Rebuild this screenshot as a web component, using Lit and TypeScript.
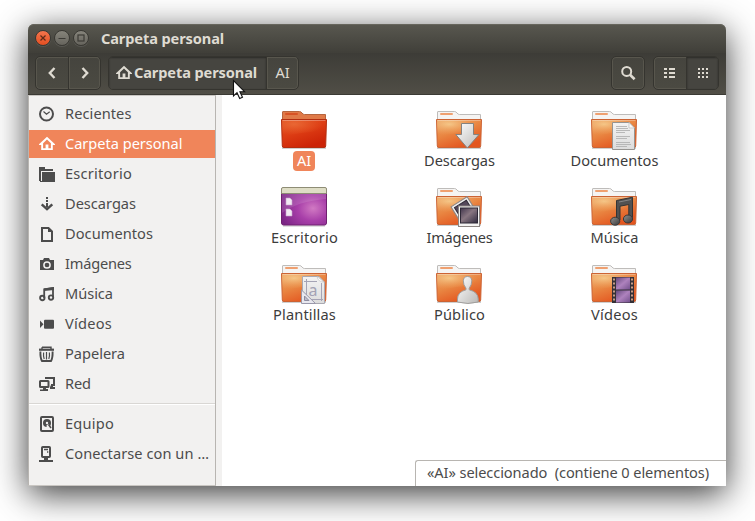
import { LitElement, html, css, svg } from "lit";
import { customElement, property } from "lit/decorators.js";
import { classMap } from "lit/directives/class-map.js";

/** A single-line label whose tracking is adjusted to fill a given width. */
@customElement("fit-label")
class FitLabel extends LitElement {
  @property() text = "";
  @property({ type: Number }) width = 0;
  static styles = css`
    :host { display: inline-block; white-space: pre; flex: none; }
    .label { display: inline-block; }
  `;
  updated() {
    const el = this.renderRoot.querySelector(".label") as HTMLElement;
    el.style.letterSpacing = "0";
    const natural = el.getBoundingClientRect().width;
    const gap = (this.width - natural) / this.text.length;
    el.style.letterSpacing = `${gap.toFixed(3)}px`;
  }
  render() {
    return html`<span class="label">${this.text}</span>`;
  }
}

const home = svg`<path d="M8 .8 16 8.2V9H13.8V14H2.2V9H0V8.2Z M8 3.4 4.1 7.2V12.2H6.6V8.6H9.4V12.2H11.9V7.2Z" fill="currentColor" fill-rule="evenodd"/>`;

const glyphs: Record<string, unknown> = {
  home,
  clock: svg`<circle cx="7.5" cy="8" r="6.5" fill="none" stroke="currentColor" stroke-width="2"/><path d="M4.5 5.5 7.5 8.2 10.7 5.8" fill="none" stroke="currentColor" stroke-width="1.2"/>`,
  folder: svg`<path d="M0 1H6V3H14V5H2V15H0Z M3 6H16V16H1V15H3Z" fill="currentColor"/><path d="M2.5 15V5.5H16" fill="none" stroke="#f2f1f0" stroke-width="1"/>`,
  down: svg`<path d="M7 1h2v2H7zM7 4h2v2H7zM7 7h2v4H7z" fill="currentColor"/><path d="M2.7 8.3 8 13.2 13.3 8.3" fill="none" stroke="currentColor" stroke-width="2.4"/>`,
  doc: svg`<path d="M3 2H9.5L13 5.5V15H3Z" fill="none" stroke="currentColor" stroke-width="2"/><path d="M9 1.5V6H13.5Z" fill="currentColor"/>`,
  camera: svg`<path d="M1 4H4L5 2H10L11 4H15V14H1Z" fill="currentColor"/><circle cx="8" cy="9" r="3.1" fill="none" stroke="#f2f1f0" stroke-width="1.5"/>`,
  music: svg`<path d="M5.2 12V3.2L14 2V11" fill="none" stroke="currentColor" stroke-width="1.8"/><path d="M5 2.5 15 1V4L5 5Z" fill="currentColor"/><circle cx="3.3" cy="12" r="2.2" fill="none" stroke="currentColor" stroke-width="1.9"/><circle cx="12" cy="11.6" r="2.2" fill="none" stroke="currentColor" stroke-width="1.9"/>`,
  video: svg`<rect x="5" y="3.7" width="10" height="9" rx="1" fill="currentColor"/><path d="M1 4.5V12L4.5 8.3Z" fill="currentColor"/>`,
  trash: svg`<path d="M3 1.2H12V3M3 1.2V3" fill="none" stroke="currentColor" stroke-width="1.4"/><path d="M0 2.6H15V4.8H0Z" fill="currentColor"/><path d="M1.4 5.5Q1.2 12 3 15H12Q13.8 12 13.6 5.5" fill="none" stroke="currentColor" stroke-width="1.9"/><path d="M4.6 6.5Q4.2 10 5.2 13M7.5 6V13.5M10.4 6.5Q10.8 10 9.8 13" fill="none" stroke="currentColor" stroke-width="1.2"/>`,
  net: svg`<path d="M7 3V2H15V9H12" fill="none" stroke="currentColor" stroke-width="2"/><path d="M12 9H14V11H16V13H11V11Z" fill="currentColor"/><rect x="1" y="5" width="8.5" height="6" rx=".5" fill="none" stroke="currentColor" stroke-width="2"/><path d="M4 12H7V13H9V15H1V13.4H4Z" fill="currentColor"/>`,
  disk: svg`<rect x="2" y="1" width="12" height="14" rx="1" fill="none" stroke="currentColor" stroke-width="2"/><circle cx="8" cy="7" r="4" fill="currentColor"/><circle cx="8" cy="7" r="1.2" fill="#f2f1f0"/><path d="M8.2 9 12 13" stroke="#f2f1f0" stroke-width="3"/><path d="M9.5 8.5 12 12" stroke="currentColor" stroke-width="1.5"/>`,
  server: svg`<rect x="3" y="1" width="8" height="10" rx=".8" fill="none" stroke="currentColor" stroke-width="2"/><path d="M5 3.5H9M8 6H9.3M7 11V14" stroke="currentColor" stroke-width="1.3"/><path d="M0 14H14V16H0ZM5 12H9V14H5Z" fill="currentColor"/>`,
  back: svg`<path d="M10.5 3 5.8 8 10.5 13" fill="none" stroke="currentColor" stroke-width="2.4"/>`,
  forward: svg`<path d="M5.5 3 10.2 8 5.5 13" fill="none" stroke="currentColor" stroke-width="2.4"/>`,
  search: svg`<circle cx="6.7" cy="6.4" r="4.5" fill="none" stroke="currentColor" stroke-width="2"/><path d="M10 9.8 14.6 14.3" stroke="currentColor" stroke-width="2.6"/>`,
  list: svg`<path d="M2 3h3v2H2zM7 3h6v2H7zM2 7h3v2H2zM7 7h6v2H7zM2 11h3v2H2zM7 11h6v2H7z" fill="currentColor"/>`,
  grid: svg`<path d="M3 3h2v2H3zM7 3h2v2H7zM11 3h2v2h-2zM3 7h2v2H3zM7 7h2v2H7zM11 7h2v2h-2zM3 11h2v2H3zM7 11h2v2H7zM11 11h2v2h-2z" fill="currentColor"/>`,
};

const glyph = (name: string) =>
  html`<svg class="glyph" width="16" height="16" viewBox="0 0 16 16">${glyphs[name]}</svg>`;

/** Emblems laid over the bottom-right corner of a folder. */
const emblems: Record<string, unknown> = {
  none: svg``,
  download: svg`<path d="M26.5 15.5H38.5V26.5H44L32.3 40 20.8 26.5H26.5Z" fill="url(#metal)" stroke="#85827f"/>`,
  document: svg`<path d="M22.5 14.5H39L44.5 20V41.5H22.5Z" fill="url(#paper)" stroke="#969491"/><path d="M39 14.5V20H44.5Z" fill="#fafafa" stroke="#bbb" stroke-width=".7"/><path d="M26 18.5H37M26 20.5H38M26 22.5H40M26 24.5H35M26 28.5H40M26 30.5H37M26 34.5H40M26 36.5H41M26 38.5H37" stroke="#b2b2b2" stroke-width=".9"/>`,
  images: svg`<g transform="rotate(-32 28 25)"><rect x="19.5" y="16" width="19" height="19" fill="#eee" stroke="#8b8583"/><rect x="22" y="18.5" width="14" height="13" fill="#54485b" stroke="#302b38"/></g><rect x="23.5" y="21" width="21" height="20.5" fill="#f4f3f2" stroke="#8b8583"/><rect x="25.5" y="23" width="17" height="15" fill="url(#photo)" stroke="#2d2836"/>`,
  music: svg`<path d="M26.5 15.5 42.5 12.2V32.5H38.8V19.5L30 21.2V35H26.5Z" fill="#515151" stroke="#343434"/><path d="M29 17 41 14.5" stroke="#858585"/><ellipse cx="25.2" cy="36.2" rx="4.6" ry="4" fill="url(#note)" stroke="#383838"/><ellipse cx="38" cy="34" rx="4.6" ry="4" fill="url(#note)" stroke="#383838"/>`,
  templates: svg`<path d="M22.5 14.5H39L44.5 20V41.5H22.5Z" fill="url(#paper)" stroke="#aaa9b2"/><path d="M37 14.5Q38 20 44 20Z" fill="#fff" stroke="#bbb" stroke-width=".6"/><path d="M26.5 17V35M41.5 21V39M24 19.5H37M30 37.5H43" stroke="#a5a4b5" stroke-width="1"/><text x="28.5" y="34" class="letter">a</text><path d="M21.5 28 35.5 41.5H21.5Z" fill="#e8e8ef" stroke="#9998aa"/><path d="M24.5 34 29 38.5H24.5Z" fill="#bdbccb" stroke="#8e8da0"/>`,
  public: svg`<path d="M22.5 40V37Q22.5 30 31 27.8V26.2Q28.3 23 28.3 18.8Q28.7 14.5 32.5 14.5Q36.4 14.5 36.8 18.8Q36.8 23 34.2 26.2V27.8Q43.2 30 43.2 37V40Q33 43 22.5 40Z" fill="url(#metal)" stroke="#a09e9c"/>`,
  video: svg`<rect x="22" y="15" width="22" height="26" fill="#343036"/><rect x="26" y="15.5" width="14" height="12" fill="url(#film)"/><rect x="26" y="28.5" width="14" height="12" fill="url(#film)"/><path d="M24 16.5V40M42 16.5V40" stroke="#d8a88f" stroke-width="1.8" stroke-dasharray="2 2"/>`,
};

const folderArt = (kind: string) => {
  const red = kind === "none";
  return html`<svg class="art" width="48" height="44" viewBox="0 0 48 44">
    <defs>
      <linearGradient id="front-${kind}" x1="0" y1="0" x2="0.55" y2="1">
        <stop offset="0" stop-color="${red ? "#df5121" : "#eda568"}" />
        <stop offset=".5" stop-color="${red ? "#dd3d14" : "#e98642"}" />
        <stop offset="1" stop-color="${red ? "#cc2307" : "#e3551f"}" />
      </linearGradient>
      <radialGradient id="glow-${kind}" cx=".28" cy=".25" r=".65">
        <stop offset="0" stop-color="${red ? "#ef7841" : "#fae0a2"}" stop-opacity=".65" />
        <stop offset="1" stop-color="${red ? "#ed6f37" : "#f1ae68"}" stop-opacity="0" />
      </radialGradient>
      <linearGradient id="metal" x1="0" y1="0" x2="1" y2="1"><stop stop-color="#fff" /><stop offset="1" stop-color="#bab9b7" /></linearGradient>
      <linearGradient id="paper" x1="0" y1="0" x2="0" y2="1"><stop stop-color="#f3f3f3" /><stop offset="1" stop-color="#dcdcdc" /></linearGradient>
      <linearGradient id="photo" x1="0" y1="0" x2="1" y2="1"><stop stop-color="#3f344b" /><stop offset=".45" stop-color="#887681" /><stop offset="1" stop-color="#302b40" /></linearGradient>
      <linearGradient id="note" x1="0" y1="0" x2="1" y2="1"><stop stop-color="#929292" /><stop offset="1" stop-color="#383838" /></linearGradient>
      <linearGradient id="film" x1="0" y1="0" x2="1" y2="1"><stop stop-color="#66497d" /><stop offset=".5" stop-color="#ae82bd" /><stop offset="1" stop-color="#74518d" /></linearGradient>
    </defs>
    <path d="M2 40H46" stroke="#000" stroke-opacity=".25" stroke-width="1.5" />
    <path d="M2.5 14V4Q2.5 3.5 3 3.5H19.5Q21 3.5 22 5T24.5 6.5H45.5V14Z" fill="${red ? "#e07a48" : "#f5f4f3"}" stroke="${red ? "#b6653e" : "#bebcba"}" />
    <rect x="5" y="5" width="13" height="2" rx="1" fill="${red ? "#d75325" : "#efa070"}" />
    <path d="M1.5 11.5H46.5L45.7 38Q45.6 39.5 44 39.5H4Q2.4 39.5 2.3 38Z" fill="url(#front-${kind})" stroke="${red ? "#b32e10" : "#cc6334"}" />
    <path d="M2 12H46L45.6 23Q20 24 2.3 29Z" fill="url(#glow-${kind})" />
    <path d="M2.5 12.5H45.5" stroke="#fff" stroke-opacity=".3" />
    ${emblems[kind]}
  </svg>`;
};

const desktopArt = () => html`<svg class="art" width="48" height="44" viewBox="0 0 48 44">
  <defs>
    <radialGradient id="desk" cx=".7" cy=".55" r=".75">
      <stop offset="0" stop-color="#d17ac3" /><stop offset=".45" stop-color="#a83fa9" /><stop offset="1" stop-color="#7b2585" />
    </radialGradient>
  </defs>
  <path d="M3 41H45" stroke="#000" stroke-opacity=".25" />
  <rect x="1.5" y="3" width="45" height="37" rx="2" fill="url(#desk)" stroke="#702070" />
  <path d="M2 9H46V14Q18 16 2 28Z" fill="#fff" fill-opacity=".12" />
  <path d="M1.5 8.5V4Q1.5 2.5 3 2.5H45Q46.5 2.5 46.5 4V8.5Z" fill="#deddc5" stroke="#8e8d75" />
  <path d="M6 13H10L12 15V20H6ZM6 24H10L12 26V31H6Z" fill="#f1e9f2" stroke="#c7a3cc" stroke-width=".6" />
</svg>`;

type Place = [icon: string, name: string, width: number];
const places: Place[] = [
  ["clock", "Recientes", 66.5], ["home", "Carpeta personal", 117.5], ["folder", "Escritorio", 67],
  ["down", "Descargas", 71], ["doc", "Documentos", 88], ["camera", "Imágenes", 66.5],
  ["music", "Música", 48], ["video", "Vídeos", 47], ["trash", "Papelera", 60], ["net", "Red", 26],
];
const devices: Place[] = [["disk", "Equipo", 49], ["server", "Conectarse con un …", 144]];
const files: Place[] = [
  ["none", "AI", 14], ["download", "Descargas", 71], ["document", "Documentos", 88],
  ["desktop", "Escritorio", 67], ["images", "Imágenes", 66], ["music", "Música", 48],
  ["templates", "Plantillas", 63], ["public", "Público", 51], ["video", "Vídeos", 47],
];

@customElement("app-root")
class AppRoot extends LitElement {
  static styles = css`
    :host, * { box-sizing: border-box; }
    :host {
      display: block; width: 755px; height: 521px; padding: 24px 29px 35px 28px;
      overflow: hidden; background: #fff;
      font: 14.6px/20px "Noto Sans", "Open Sans", sans-serif; color: #4c4c4c;
    }
    .window {
      position: relative; display: flex; flex-direction: column; width: 698px; height: 462px;
      border-radius: 6px 6px 0 0; background: #fff;
      box-shadow: 0 8px 34px rgba(0, 0, 0, .78);
    }
    svg { display: block; flex: none; }
    fit-label { position: relative; top: -1px; }
    .titlebar {
      height: 29px; flex: none; display: flex; align-items: center; gap: 3px; padding-left: 7px;
      border-radius: 6px 6px 0 0; color: #dfdbd2; font-weight: 700;
      background: linear-gradient(#595850, #403f39); box-shadow: inset 0 1px #67665d;
    }
    .titlebar fit-label { margin-left: 9px; }
    .dot {
      width: 16px; height: 16px; border-radius: 50%; border: 1px solid #393833;
      background: linear-gradient(#86847b, #66645d); box-shadow: 0 1px rgba(255, 255, 255, .1);
      margin-top: -1px;
    }
    .dot.close { background: linear-gradient(#f4754d, #e34f22); }
    .toolbar {
      height: 42px; flex: none; display: flex; align-items: center; padding: 0 7px 1px 7px;
      background: linear-gradient(#3d3c37, #504e46); border-bottom: 1px solid #3b3a34; color: #dfdbd2;
    }
    .group {
      display: flex; height: 34px; border: 1px solid #35342f; border-radius: 5px;
      background: linear-gradient(#45443e, #4b4a42); box-shadow: inset 0 0 0 1px #58564d; overflow: hidden;
    }
    .button { display: flex; align-items: center; justify-content: center; width: 32px; }
    .button + .button { border-left: 1px solid #35342f; box-shadow: inset 1px 1px #58564d; }
    .button.pressed, .button + .button.pressed { background: #464540; box-shadow: inset 0 1px 2px #2b2a26; }
    .path { margin-left: 7px; }
    .path .here { width: 157px; font-weight: 700; justify-content: flex-start; padding-left: 7px; gap: 2px; }
    .search { margin-left: auto; margin-right: 8px; }
    .body { flex: 1; min-height: 0; display: flex; }
    .sidebar {
      width: 188px; background: #f2f1f0; border: 1px solid #b8b5b1; border-top-color: #c9c6c2;
      border-bottom-color: #c9c6c2; padding-top: 4px; display: flex; flex-direction: column; gap: 2px;
    }
    .place { height: 28px; flex: none; display: flex; align-items: center; gap: 10px; padding-left: 10px; }
    .place.selected { background: #f0855a; color: #fff; }
    .rule { height: 2px; margin: 3px 0 3px; background: #d9d7d4; border-bottom: 1px solid #fff; }
    .handle { width: 6px; background: #f2f1f0; }
    .files {
      flex: 1; display: grid; grid-template-columns: repeat(3, 154px); grid-auto-rows: 77px;
      column-gap: 1px; padding: 13px 0 0 5px; color: #3c3c3c;
    }
    .file { display: flex; flex-direction: column; align-items: center; }
    .name { margin: -1px 0 0 1px; padding: 0 4px; height: 20px; border-radius: 4px; }
    .name.selected { margin-left: 0; background: #f0855a; color: #fff; }
    .letter { font: 16px "Noto Sans", sans-serif; fill: #a3a2b4; }
    .status {
      position: absolute; right: 0; bottom: 0; width: 311px; height: 26px; padding: 2px 0 0 11px;
      background: #fff; border: solid #b8b5b1; border-width: 1px 0 0 1px; border-radius: 3px 0 0 0;
    }
    .pointer { position: absolute; left: 204px; top: 55px; }
  `;

  private place([icon, name, width]: Place) {
    return html`<div class=${classMap({ place: true, selected: icon === "home" })}>
      ${glyph(icon)}<fit-label .text=${name} .width=${width}></fit-label>
    </div>`;
  }

  render() {
    return html`<div class="window">
      <div class="titlebar">
        <svg class="dot close" viewBox="0 0 14 14"><path d="M4.5 4.5 9.5 9.5M9.5 4.5 4.5 9.5" stroke="#5d2b18" stroke-width="1.2" /></svg>
        <svg class="dot" viewBox="0 0 14 14"><path d="M3.5 7.5H10.5" stroke="#3c3b36" stroke-width="1.2" /></svg>
        <svg class="dot" viewBox="0 0 14 14"><rect x="4" y="4" width="6" height="6" fill="none" stroke="#3c3b36" stroke-width="1.2" /></svg>
        <fit-label .text=${"Carpeta personal"} .width=${123}></fit-label>
      </div>
      <div class="toolbar">
        <div class="group"><span class="button">${glyph("back")}</span><span class="button">${glyph("forward")}</span></div>
        <div class="group path">
          <span class="button here pressed">${glyph("home")}<fit-label .text=${"Carpeta personal"} .width=${123}></fit-label></span>
          <span class="button"><fit-label .text=${"AI"} .width=${14}></fit-label></span>
        </div>
        <div class="group search"><span class="button">${glyph("search")}</span></div>
        <div class="group"><span class="button">${glyph("list")}</span><span class="button pressed">${glyph("grid")}</span></div>
      </div>
      <div class="body">
        <div class="sidebar">
          ${places.map((p) => this.place(p))}
          <div class="rule"></div>
          ${devices.map((p) => this.place(p))}
        </div>
        <div class="handle"></div>
        <div class="files">
          ${files.map(([kind, name, width]) => html`<div class="file">
            ${kind === "desktop" ? desktopArt() : folderArt(kind)}
            <div class=${classMap({ name: true, selected: name === "AI" })}><fit-label .text=${name} .width=${width}></fit-label></div>
          </div>`)}
        </div>
      </div>
      <div class="status"><fit-label .text=${"«AI» seleccionado  (contiene 0 elementos)"} .width=${282}></fit-label></div>
      <svg class="pointer" width="14" height="21" viewBox="0 0 14 21">
        <path d="M1.5 1.5V17L5 13.7 7.7 19.5 10.5 18.2 7.9 12.7H12.5Z" fill="#fff" stroke="#111" stroke-width="1.1" />
      </svg>
    </div>`;
  }
}
